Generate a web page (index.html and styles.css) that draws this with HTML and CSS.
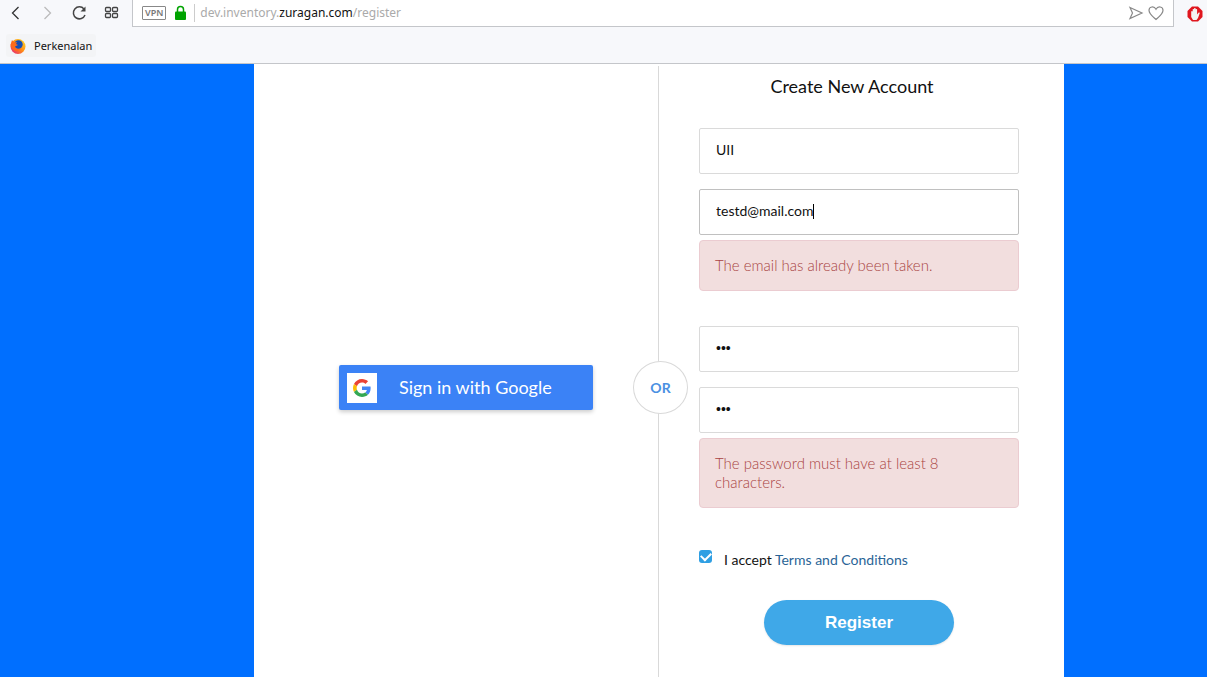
FILE: index.html
```html
<!DOCTYPE html>
<html lang="en">
<head>
<meta charset="utf-8">
<meta name="viewport" content="width=device-width, initial-scale=1">
<title>Create New Account</title>
<link rel="stylesheet" href="styles.css">
</head>
<body>
<header class="browser">
  <div class="toolbar">
    <nav class="nav">
      <button class="icon-button" type="button" aria-label="Back"><svg width="16" height="16" viewBox="0 0 16 16"><path d="M10.500 1 4.500 7l6 6" fill="none" stroke="#333" stroke-width="1.300"/></svg></button>
      <button class="icon-button" type="button" aria-label="Forward"><svg width="16" height="16" viewBox="0 0 16 16"><path d="m4.500 1 6 6-6 6" fill="none" stroke="#bbb" stroke-width="1.300"/></svg></button>
      <button class="icon-button" type="button" aria-label="Reload"><svg width="16" height="16" viewBox="0 0 16 16"><path d="M12 3A6 6 0 1 0 13 9" fill="none" stroke="#444" stroke-width="1.500"/><path d="M13.500.5V5.500H8.500z" fill="#444"/></svg></button>
      <button class="icon-button" type="button" aria-label="Speed dial"><svg width="16" height="16" viewBox="0 0 16 16" fill="none" stroke="#444" stroke-width="1.300"><rect x="1.500" y="1.500" width="5" height="4" rx="1"/><rect x="8.500" y="1.500" width="5" height="4" rx="1"/><rect x="1.500" y="7.500" width="5" height="4" rx="1"/><rect x="8.500" y="7.500" width="5" height="4" rx="1"/></svg></button>
    </nav>
    <div class="address">
      <span class="vpn">VPN</span>
      <svg class="lock" width="12" height="16" viewBox="0 0 12 16"><path d="M3.500 7V4.500a3 3 0 0 1 6 0V7" fill="none" stroke="#00a300" stroke-width="1.500"/><rect x="1" y="6.500" width="11" height="8.500" rx="1" fill="#00a300"/></svg>
      <span class="url">dev.inventory.<span class="domain">zuragan.com</span>/register</span>
      <button class="icon-button" type="button" aria-label="Send"><svg width="16" height="16" viewBox="0 0 16 16"><path d="m2 2.500 12 5.500-12 5.500L4.500 8z" fill="none" stroke="#888" stroke-width="1.200"/></svg></button>
      <button class="icon-button" type="button" aria-label="Bookmark"><svg width="16" height="16" viewBox="0 0 16 16"><path d="M8 14.500C4.500 11.500 1 9 1 5.300 1 1.500 6 0.700 8 4.200c2-3.500 7-2.700 7 1.100 0 3.700-3.500 6.200-7 9.200z" fill="none" stroke="#888" stroke-width="1.200"/></svg></button>
    </div>
    <button class="icon-button blocker" type="button" aria-label="Ad blocker"><svg width="16" height="16" viewBox="0 0 16 16"><path d="M5 .5h6L15.500 5v6L11 15.500H5L.5 11V5z" fill="#e0161e"/><path d="M4.200 9V5.500q.8-.9 1.500 0V3.300q.7-.8 1.400 0V2.300q.8-.8 1.500 0v1q.8-.8 1.500 0V8.500l1.600-2q1.500-.3 1 .8L11 12 9.500 14H6L4.200 11z" fill="#f3f3f3"/></svg></button>
  </div>
  <div class="bookmarks">
    <a class="bookmark" href="#"><svg width="16" height="16" viewBox="0 0 16 16"><defs><linearGradient id="flame" x1="1" y1="0" x2="0" y2="1"><stop offset="0" stop-color="#ffe226"/><stop offset=".5" stop-color="#ff8a16"/><stop offset="1" stop-color="#e31587"/></linearGradient></defs><circle cx="8" cy="8.500" r="7.500" fill="url(#flame)"/><circle cx="8.500" cy="6.500" r="4.200" fill="#164fb5"/><path d="M.5 7 2 2 4 4.500l3-.5-1 2 2 1-3 1.500c0 3 4 3.500 6 1.500-1 3.500-7 4-9 0z" fill="#ff6a1a"/></svg>Perkenalan</a>
  </div>
</header>
<main class="page">
  <div class="card">
    <section class="social">
      <button class="google" type="button">
        <span class="google-logo"><svg width="18" height="18" viewBox="0 0 48 48"><path fill="#EA4335" d="M24 9.500c3.540 0 6.710 1.220 9.210 3.600l6.850-6.850C35.900 2.380 30.470 0 24 0 14.620 0 6.510 5.380 2.560 13.220l7.980 6.190C12.430 13.720 17.740 9.500 24 9.500z"/><path fill="#4285F4" d="M46.980 24.550c0-1.570-.15-3.090-.38-4.550H24v9.020h12.940c-.58 2.960-2.260 5.480-4.780 7.180l7.730 6c4.510-4.180 7.090-10.360 7.090-17.650z"/><path fill="#FBBC05" d="M10.530 28.590c-.48-1.450-.76-2.990-.76-4.590s.27-3.140.76-4.590l-7.980-6.190C.92 16.460 0 20.120 0 24c0 3.880.92 7.540 2.560 10.780z"/><path fill="#34A853" d="M24 48c6.480 0 11.930-2.130 15.890-5.810l-7.730-6c-2.150 1.450-4.920 2.300-8.160 2.300-6.260 0-11.570-4.220-13.470-9.910l-7.980 6.190C6.510 42.620 14.620 48 24 48z"/></svg></span>
        <span class="google-label">Sign in with Google</span>
      </button>
    </section>
    <form class="register">
      <span class="or">OR</span>
      <h1 class="title">Create New Account</h1>
      <div class="group">
        <input class="field" type="text" aria-label="Name" value="UII">
        <div class="focused">
          <input class="field" type="email" aria-label="Email" value="testd@mail.com">
          <span class="caret"></span>
        </div>
      </div>
      <p class="error" role="alert">The email has already been taken.</p>
      <div class="group passwords">
        <input class="field password" type="password" aria-label="Password" value="abc">
        <input class="field password" type="password" aria-label="Confirm password" value="abc">
      </div>
      <p class="error" role="alert">The password must have at least 8 characters.</p>
      <div class="terms">
        <input class="check" type="checkbox" id="accept" checked>
        <label for="accept">I accept <a class="link" href="#">Terms and Conditions</a></label>
      </div>
      <button class="submit" type="submit">Register</button>
    </form>
  </div>
</main>
</body>
</html>
```
FILE: styles.css
```css
* { box-sizing: border-box; }

body {
  margin: 0;
  min-height: 100vh;
  display: flex;
  flex-direction: column;
  font-family: Lato, "Liberation Sans", sans-serif;
  font-size: 14px;
  color: #111;
}

button { border: 0; font-family: inherit; cursor: pointer; }

/* Browser bar */
.browser {
  background: #f7f8fb;
  border-bottom: 1px solid #c4c6ca;
  font-family: "Noto Sans", sans-serif;
}

.toolbar { display: flex; height: 27px; }

.nav {
  display: flex;
  align-items: center;
  gap: 16px;
  width: 132px;
  padding-left: 8px;
}

.icon-button { display: flex; padding: 0; background: none; }

.address {
  flex: 1;
  display: flex;
  align-items: center;
  gap: 4px;
  padding: 0 9px;
  background: #fff;
  border: 1px solid #c4c6ca;
  border-top: 0;
}

.vpn {
  padding: 0 2px;
  border: 1px solid #888;
  border-radius: 1px;
  font-size: 9px;
  font-weight: 600;
  line-height: 12px;
  color: #777;
}

.lock { margin: 0 4px 0 4px; }

.url {
  flex: 1;
  padding-left: 5px;
  border-left: 1px solid #ccc;
  font-size: 12px;
  line-height: 18px;
  color: #aaa;
}

.domain { color: #111; }

.blocker { align-items: center; padding: 0 4px 0 13px; }

.bookmarks { display: flex; padding: 7px 6px 6px; }

.bookmark {
  display: flex;
  align-items: center;
  gap: 8px;
  height: 23px;
  padding: 0 4px;
  border-radius: 3px;
  background: #f3f4f6;
  font-size: 11px;
  color: #111;
  text-decoration: none;
}

/* Page */
.page {
  flex: 1;
  display: grid;
  grid-template-columns: 254fr minmax(auto, 810px) 143fr;
  background: #006fff;
}

.card {
  grid-column: 2;
  display: grid;
  grid-template-columns: 404fr 406fr;
  padding-top: 2px;
  background: #fff;
}

.social { padding: 299px 65px 0 85px; }

.google {
  display: flex;
  align-items: center;
  width: 100%;
  height: 45px;
  padding: 0 8px;
  border-radius: 2px;
  background: #3b82f6;
  box-shadow: 0 2px 4px rgba(0, 0, 0, 0.2);
  color: #fff;
  font-size: 18px;
}

.google-logo {
  display: grid;
  place-items: center;
  width: 30px;
  height: 30px;
  background: #fff;
}

.google-label { padding: 0 0 2px 22px; }

.or {
  position: absolute;
  top: 295px;
  left: -26px;
  display: grid;
  place-items: center;
  width: 55px;
  height: 53px;
  border: 1px solid #d9d9d9;
  border-radius: 50%;
  background: #fff;
  color: #4a90e2;
  font-size: 14px;
  font-weight: 700;
}

.register {
  position: relative;
  display: flex;
  flex-direction: column;
  padding: 8px 45px 32px 40px;
  border-left: 1px solid #d9d9d9;
}

.title {
  margin: 0 0 30px;
  padding-right: 14px;
  font-size: 18px;
  font-weight: 400;
  line-height: 24px;
  text-align: center;
}

.group { display: grid; gap: 15px; }

.passwords { margin-top: 35px; }

.focused { position: relative; }

.field {
  display: block;
  width: 100%;
  height: 46px;
  padding: 0 16px 3px;
  border: 1px solid #dadada;
  border-radius: 2px;
  background: #fff;
  color: #111;
  font-family: inherit;
  font-size: 14px;
}

.focused .field { border-color: #c0c0c0; }

.password { padding-bottom: 2px; font-family: "Liberation Sans", sans-serif; }

.caret {
  position: absolute;
  top: 15px;
  left: 114px;
  width: 1px;
  height: 15px;
  background: #000;
}

.error {
  margin: 5px 0 0;
  padding: 15px 48px 15px 15px;
  border: 1px solid #ebccd1;
  border-radius: 4px;
  background: #f2dede;
  color: #a94442;
  font-size: 15px;
  font-weight: 300;
  line-height: 19px;
}

.terms {
  display: flex;
  align-items: flex-start;
  gap: 12px;
  margin-top: 42px;
  line-height: 19px;
}

.check {
  appearance: none;
  display: grid;
  place-items: center;
  width: 13px;
  height: 13px;
  margin: 0;
  border-radius: 3px;
  background: #2f9fe3;
}

.check:checked::before {
  content: "";
  width: 8px;
  height: 5px;
  margin-bottom: 2px;
  border: solid #fff;
  border-width: 0 0 2px 2px;
  transform: rotate(-45deg);
}

.link { color: #2a6496; text-decoration: none; }

.submit {
  align-self: center;
  width: 190px;
  height: 45px;
  margin-top: 31px;
  border-radius: 23px;
  background: #3fa8e8;
  box-shadow: 0 1px 2px rgba(0, 0, 0, 0.1);
  color: #fff;
  font-family: "Liberation Sans", Arial, sans-serif;
  font-size: 17px;
  font-weight: 700;
}
```
